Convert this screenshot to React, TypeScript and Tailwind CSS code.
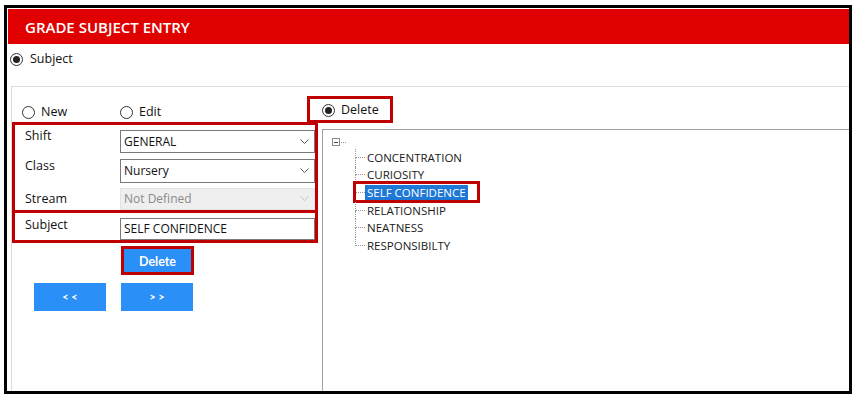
const items = [
  'CONCENTRATION',
  'CURIOSITY',
  'SELF CONFIDENCE',
  'RELATIONSHIP',
  'NEATNESS',
  'RESPONSIBILTY',
]

const Radio = ({ checked }: { checked?: boolean }) => (
  <div className="flex h-[13px] w-[13px] shrink-0 items-center justify-center rounded-full border border-[#333]">
    {checked && <div className="h-[7px] w-[7px] rounded-full bg-[#222]" />}
  </div>
)

const Chevron = ({ disabled }: { disabled?: boolean }) => (
  <svg width="9" height="6" viewBox="0 0 9 6" className="mr-[5px]">
    <polyline
      points="0.5,0.5 4.5,4.5 8.5,0.5"
      fill="none"
      stroke={disabled ? '#c4c4c4' : '#555'}
      strokeWidth="1"
    />
  </svg>
)

const Combo = ({
  value,
  disabled,
  cls,
}: {
  value: string
  disabled?: boolean
  cls: string
}) => (
  <div
    className={`flex flex-1 items-center justify-between border pl-[3px] text-[12px] ${cls} ${
      disabled
        ? 'border-[#e3e3e3] bg-[#efefef] text-[#8a8a8a]'
        : 'border-[#7a7a7a] bg-white text-[#111]'
    }`}
  >
    <span>{value}</span>
    <Chevron disabled={disabled} />
  </div>
)

export default function App() {
  return (
    <div
      className="h-[399px] w-[858px] bg-white pt-[5px] pl-[4px] text-[#111]"
      style={{ fontFamily: '"Open Sans", "Noto Sans", sans-serif' }}
    >
      <div className="flex h-[389px] w-[848px] flex-col border-[3px] border-black pt-px pl-px">
        {/* header */}
        <div className="flex h-[35px] shrink-0 items-center bg-[#e00000] pt-px pl-[17px] text-[15px] font-semibold text-white">
          GRADE SUBJECT ENTRY
        </div>

        {/* subject radio */}
        <div className="h-[42px] shrink-0 pt-[7px] pl-[2px]">
          <div className="flex h-[16px] items-center gap-[7px] text-[12.5px]">
            <Radio checked />
            <span>Subject</span>
          </div>
        </div>

        {/* group box */}
        <div className="ml-[3px] flex flex-1 flex-col border-t border-l border-[#dcdcdc]">
          <div className="flex h-[35px] shrink-0 items-start text-[12.5px]">
            <div className="mt-[17px] ml-[10px] flex h-[16px] w-[98px] items-center gap-[6px]">
              <Radio />
              <span>New</span>
            </div>
            <div className="mt-[17px] flex h-[16px] w-[187px] items-center gap-[6px]">
              <Radio />
              <span>Edit</span>
            </div>
            <div className="mt-[9px] flex h-[27px] w-[86px] items-center gap-[6px] border-[3px] border-[#c00000] pt-px pl-[12px]">
              <Radio checked />
              <span>Delete</span>
            </div>
          </div>

          <div className="flex flex-1">
            {/* left column */}
            <div className="w-[306px] shrink-0">
              <div className="h-[91px] border-[3px] border-[#c00000] text-[12.5px]">
                <div className="flex h-[28px] items-start">
                  <div className="w-[105px] pt-[3px] pl-[10px] leading-[16px]">Shift</div>
                  <Combo value="GENERAL" cls="mt-[5px] h-[23px]" />
                </div>
                <div className="flex h-[30px] items-start">
                  <div className="w-[105px] pt-[5px] pl-[10px] leading-[16px]">Class</div>
                  <Combo value="Nursery" cls="mt-[6px] h-[24px]" />
                </div>
                <div className="flex h-[27px] items-start">
                  <div className="w-[105px] pt-[8px] pl-[10px] leading-[16px]">Stream</div>
                  <Combo value="Not Defined" disabled cls="mt-[5px] h-[22px]" />
                </div>
              </div>
              <div className="flex h-[30px] items-start border-[3px] border-t-0 border-[#c00000] text-[12.5px]">
                <div className="w-[105px] pt-[4px] pl-[10px] leading-[16px]">Subject</div>
                <div className="mt-[5px] flex h-[22px] flex-1 items-center border border-[#7a7a7a] bg-white pl-[3px] text-[12px]">
                  SELF CONFIDENCE
                </div>
              </div>

              <button
                className="mt-[3px] ml-[109px] flex h-[29px] w-[73px] items-center justify-center border-[3px] border-[#c00000] bg-[#2a8ff7] pt-[3px] text-[12.5px] font-bold text-white"
                style={{ fontFamily: 'Lato, sans-serif' }}
              >
                Delete
              </button>

              <div
                className="mt-[8px] ml-[22px] flex gap-[15px] text-[11px] font-bold text-white"
                style={{ fontFamily: 'Lato, sans-serif' }}
              >
                <button className="flex h-[28px] w-[72px] items-center justify-center bg-[#2a8ff7] pt-px">
                  &lt; &lt;
                </button>
                <button className="flex h-[28px] w-[72px] items-center justify-center bg-[#2a8ff7] pt-px">
                  &gt; &gt;
                </button>
              </div>
            </div>

            {/* tree view */}
            <div className="mt-[7px] ml-[4px] flex-1 border-t border-l border-[#a0a0a0] bg-white">
              <div className="mt-[8px] ml-[9px] flex items-center">
                <div className="flex h-[8px] w-[8px] items-center justify-center border border-[#8a8a8a]">
                  <div className="h-px w-[4px] bg-[#444]" />
                </div>
                <div className="ml-px w-[5px] border-t border-dotted border-[#999]" />
              </div>
              <div className="mt-[3px] ml-[32px] text-[11.5px] text-[#1a1a1a]">
                {items.map((item, i) => {
                  const last = i === items.length - 1
                  const selected = item === 'SELF CONFIDENCE'
                  return (
                    <div key={item} className="relative flex h-[17.6px]">
                      <div className="flex w-[10px] flex-col">
                        <div className="h-1/2 border-b border-l border-dotted border-[#999]" />
                        <div
                          className={`h-1/2 border-dotted border-[#999] ${
                            last ? '' : 'border-l'
                          }`}
                        />
                      </div>
                      <div className="flex items-center">
                        <span
                          className={`px-[2px] leading-[16px] ${
                            selected ? 'bg-[#1e78d6] text-white' : ''
                          }`}
                        >
                          {item}
                        </span>
                      </div>
                      {selected && (
                        <div className="absolute -top-[3px] -left-[2px] h-[22px] w-[127px] border-[3px] border-[#c00000]" />
                      )}
                    </div>
                  )
                })}
              </div>
            </div>
          </div>
        </div>
      </div>
    </div>
  )
}
